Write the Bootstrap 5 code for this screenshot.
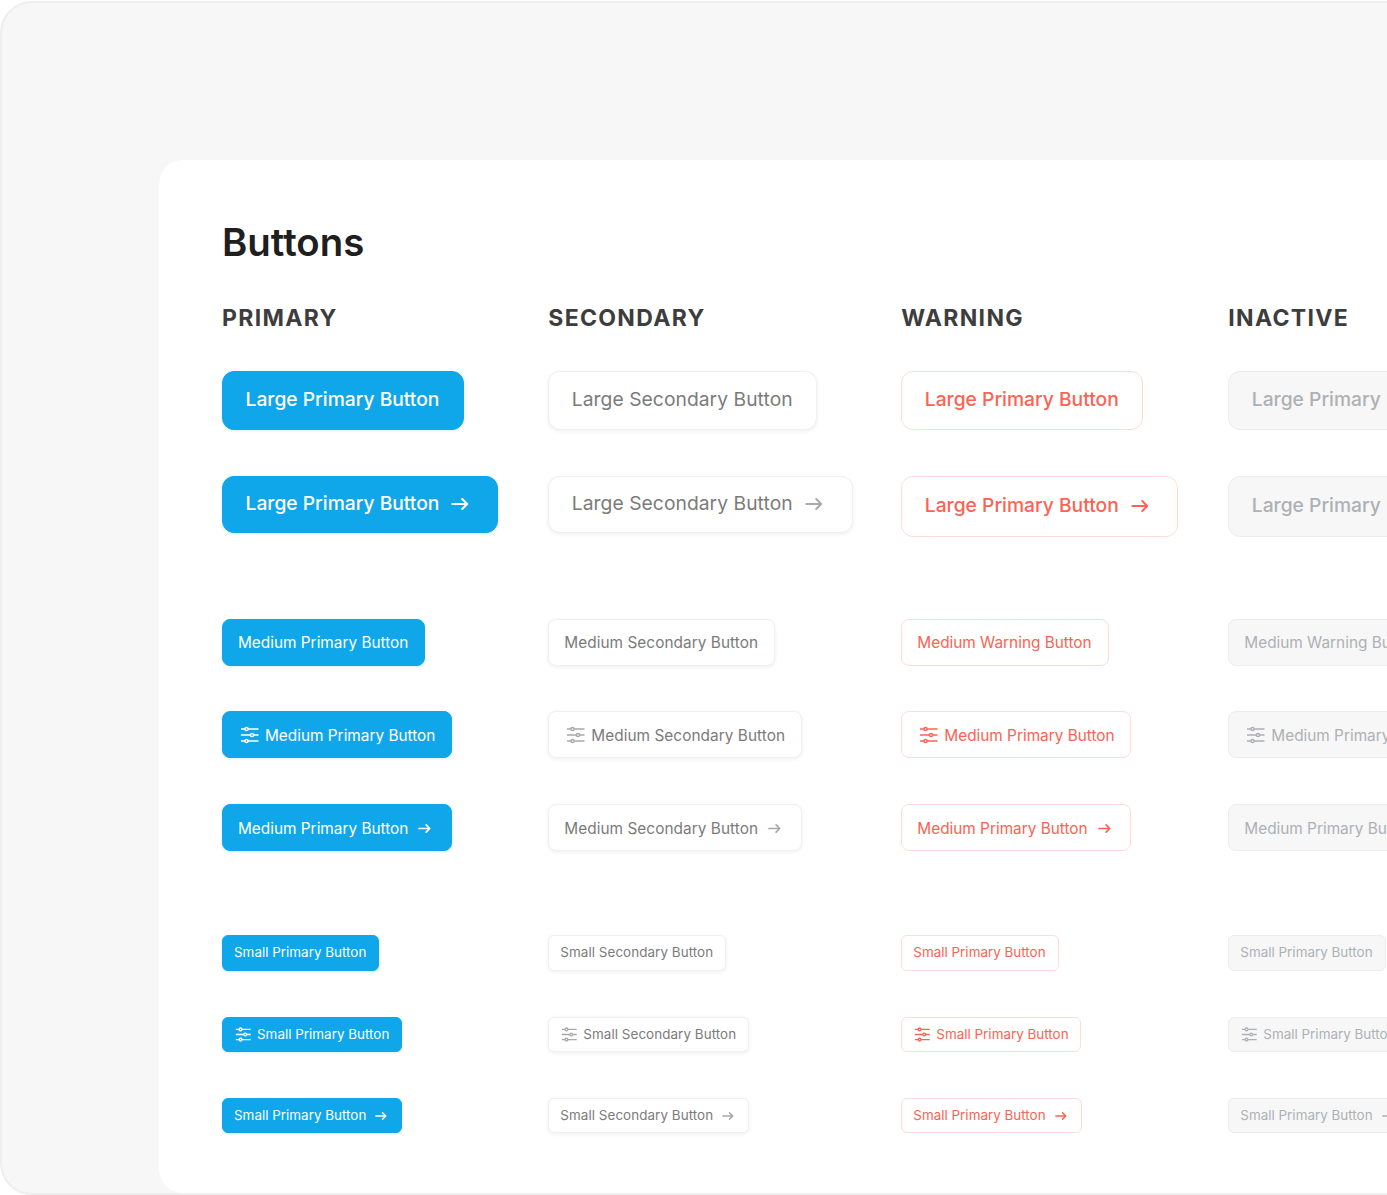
<!DOCTYPE html>
<html lang="en">
<head>
<meta charset="utf-8">
<title>Buttons</title>
<link href="https://cdn.jsdelivr.net/npm/bootstrap@5.3.0/dist/css/bootstrap.min.css" rel="stylesheet">
<style>
html,body{height:100%;background:#fff;overflow:hidden}
body{font-family:Inter,"Liberation Sans",sans-serif}
.frame{width:1440px;height:1194px;margin-top:1px;background:#f7f7f7;border:2px solid #eee;border-radius:32px;padding-top:157px;padding-left:157px;overflow:hidden}
.sheet{background:#fff;border-radius:24px;height:1033px;padding:57px 0 0 63px}
.ttl{font-size:38.4px;font-weight:600;line-height:50px;color:#1f1f1f;margin:0 0 39px}
.board{display:grid;grid-template-columns:326.3px 353px 327px 400px;grid-template-rows:65px 105px 143px 92px 93px 131px 82px 81px 36px;align-items:start}
.colhead{font-size:23.04px;font-weight:700;letter-spacing:1.3px;color:#3d3d3d;line-height:24px;margin:0;text-transform:uppercase}
.kbtn{display:inline-flex;align-items:center;white-space:nowrap;border-width:1px;border-style:solid;justify-self:start;font-weight:500;--bs-btn-line-height:1.2}
.kbtn svg{flex:none;fill:none;stroke:currentColor}
.sz-l{font-size:19.25px;border-radius:12px;height:59px;padding:0 23.500px 2px 22.500px}
.sz-l.tall{height:57px;padding-right:28px}
.sz-l.taller{height:61px;padding-right:28.500px}
.sz-l svg{width:18px;height:18px;margin-left:12px;margin-bottom:-1px;stroke-width:2.2}
.sz-m{font-size:15.36px;font-weight:400;border-radius:8px;height:47px;padding:2px 16px 0 15px}
.sz-m.has-arrow{padding:3px 19.500px 0 15px}
.sz-m.has-arrow svg{width:13px;height:13px;margin-left:10px;margin-top:-2px;stroke-width:2.6}
.sz-m.has-tune{padding:3px 15.500px 0 17px}
.sz-m.has-tune svg{width:20px;height:20px;margin-right:5px;margin-top:-3px;stroke-width:1.5}
.sz-s{font-size:13.44px;font-weight:400;border-radius:6px;height:36px;padding:0 12px 2px 11px}
.sz-s.has-arrow{height:35px;padding:0 14px 0 11px}
.sz-s.has-arrow svg{width:12px;height:12px;margin-left:9px;stroke-width:2.6}
.sz-s.has-tune{height:35px;padding:0 11.500px 0 12px}
.sz-s.has-tune svg{width:17px;height:17px;margin-right:5px;stroke-width:1.6}
.k-pri,.k-pri:hover{background:#10a6ea;border-color:#10a6ea;color:#fff;box-shadow:0 1px 3px rgba(16,166,234,.15)}
.k-sec,.k-sec:hover{background:#fff;border-color:#f0f0f0;color:#7b7b7b;box-shadow:0 1px 4px rgba(0,0,0,.07);font-weight:400;letter-spacing:.05px}
.k-sec svg{color:#a9a9a9}
.k-war,.k-war:hover{background:#fff;border-color:#ffdcd7;color:#fb6352}
.k-ina,.k-ina:disabled{background:#f7f7f7;border-color:#ececec;color:#adb1b5;opacity:1}
.sz-l.tall.k-sec{padding-right:29px}
</style>
</head>
<body>
<svg width="0" height="0" class="d-block position-absolute">
  <defs>
    <symbol id="ic-arrow" viewBox="0 0 20 20"><path d="M1.500 10H18M12.500 4.500L18 10l-5.500 5.500" stroke-linecap="round" stroke-linejoin="round"/></symbol>
    <symbol id="ic-tune" viewBox="0 0 20 20"><path d="M1 4h17.500M1 10h17.500M1 16h17.500"/><circle cx="6.500" cy="4" r="1.600" fill="#10a6ea"/><circle cx="12" cy="10" r="1.600" fill="#10a6ea"/><circle cx="6.500" cy="16" r="1.600" fill="#10a6ea"/></symbol>
    <symbol id="ic-tune-w" viewBox="0 0 20 20"><path d="M1 4h17.500M1 10h17.500M1 16h17.500"/><circle cx="6.500" cy="4" r="1.600" fill="#fff"/><circle cx="12" cy="10" r="1.600" fill="#fff"/><circle cx="6.500" cy="16" r="1.600" fill="#fff"/></symbol>
    <symbol id="ic-tune-g" viewBox="0 0 20 20"><path d="M1 4h17.500M1 10h17.500M1 16h17.500"/><circle cx="6.500" cy="4" r="1.600" fill="#f7f7f7"/><circle cx="12" cy="10" r="1.600" fill="#f7f7f7"/><circle cx="6.500" cy="16" r="1.600" fill="#f7f7f7"/></symbol>
  </defs>
</svg>
<div class="frame">
  <div class="sheet">
    <h1 class="ttl">Buttons</h1>
    <div class="board">
      <h2 class="colhead">Primary</h2><h2 class="colhead">Secondary</h2><h2 class="colhead">Warning</h2><h2 class="colhead">Inactive</h2>

      <button class="btn kbtn sz-l k-pri">Large Primary Button</button>
      <button class="btn kbtn sz-l k-sec">Large Secondary Button</button>
      <button class="btn kbtn sz-l k-war">Large Primary Button</button>
      <button class="btn kbtn sz-l k-ina" disabled>Large Primary Button</button>

      <button class="btn kbtn sz-l tall k-pri">Large Primary Button<svg><use href="#ic-arrow"/></svg></button>
      <button class="btn kbtn sz-l tall k-sec">Large Secondary Button<svg><use href="#ic-arrow"/></svg></button>
      <button class="btn kbtn sz-l taller k-war">Large Primary Button<svg><use href="#ic-arrow"/></svg></button>
      <button class="btn kbtn sz-l taller k-ina" disabled>Large Primary Button<svg><use href="#ic-arrow"/></svg></button>

      <button class="btn kbtn sz-m k-pri">Medium Primary Button</button>
      <button class="btn kbtn sz-m k-sec">Medium Secondary Button</button>
      <button class="btn kbtn sz-m k-war">Medium Warning Button</button>
      <button class="btn kbtn sz-m k-ina" disabled>Medium Warning Button</button>

      <button class="btn kbtn sz-m has-tune k-pri"><svg><use href="#ic-tune"/></svg>Medium Primary Button</button>
      <button class="btn kbtn sz-m has-tune k-sec"><svg><use href="#ic-tune-w"/></svg>Medium Secondary Button</button>
      <button class="btn kbtn sz-m has-tune k-war"><svg><use href="#ic-tune-w"/></svg>Medium Primary Button</button>
      <button class="btn kbtn sz-m has-tune k-ina" disabled><svg><use href="#ic-tune-g"/></svg>Medium Primary Button</button>

      <button class="btn kbtn sz-m has-arrow k-pri">Medium Primary Button<svg><use href="#ic-arrow"/></svg></button>
      <button class="btn kbtn sz-m has-arrow k-sec">Medium Secondary Button<svg><use href="#ic-arrow"/></svg></button>
      <button class="btn kbtn sz-m has-arrow k-war">Medium Primary Button<svg><use href="#ic-arrow"/></svg></button>
      <button class="btn kbtn sz-m has-arrow k-ina" disabled>Medium Primary Button<svg><use href="#ic-arrow"/></svg></button>

      <button class="btn kbtn sz-s k-pri">Small Primary Button</button>
      <button class="btn kbtn sz-s k-sec">Small Secondary Button</button>
      <button class="btn kbtn sz-s k-war">Small Primary Button</button>
      <button class="btn kbtn sz-s k-ina" disabled>Small Primary Button</button>

      <button class="btn kbtn sz-s has-tune k-pri"><svg><use href="#ic-tune"/></svg>Small Primary Button</button>
      <button class="btn kbtn sz-s has-tune k-sec"><svg><use href="#ic-tune-w"/></svg>Small Secondary Button</button>
      <button class="btn kbtn sz-s has-tune k-war"><svg><use href="#ic-tune-w"/></svg>Small Primary Button</button>
      <button class="btn kbtn sz-s has-tune k-ina" disabled><svg><use href="#ic-tune-g"/></svg>Small Primary Button</button>

      <button class="btn kbtn sz-s has-arrow k-pri">Small Primary Button<svg><use href="#ic-arrow"/></svg></button>
      <button class="btn kbtn sz-s has-arrow k-sec">Small Secondary Button<svg><use href="#ic-arrow"/></svg></button>
      <button class="btn kbtn sz-s has-arrow k-war">Small Primary Button<svg><use href="#ic-arrow"/></svg></button>
      <button class="btn kbtn sz-s has-arrow k-ina" disabled>Small Primary Button<svg><use href="#ic-arrow"/></svg></button>
    </div>
  </div>
</div>
<script src="https://cdn.jsdelivr.net/npm/bootstrap@5.3.0/dist/js/bootstrap.bundle.min.js"></script>
</body>
</html>
